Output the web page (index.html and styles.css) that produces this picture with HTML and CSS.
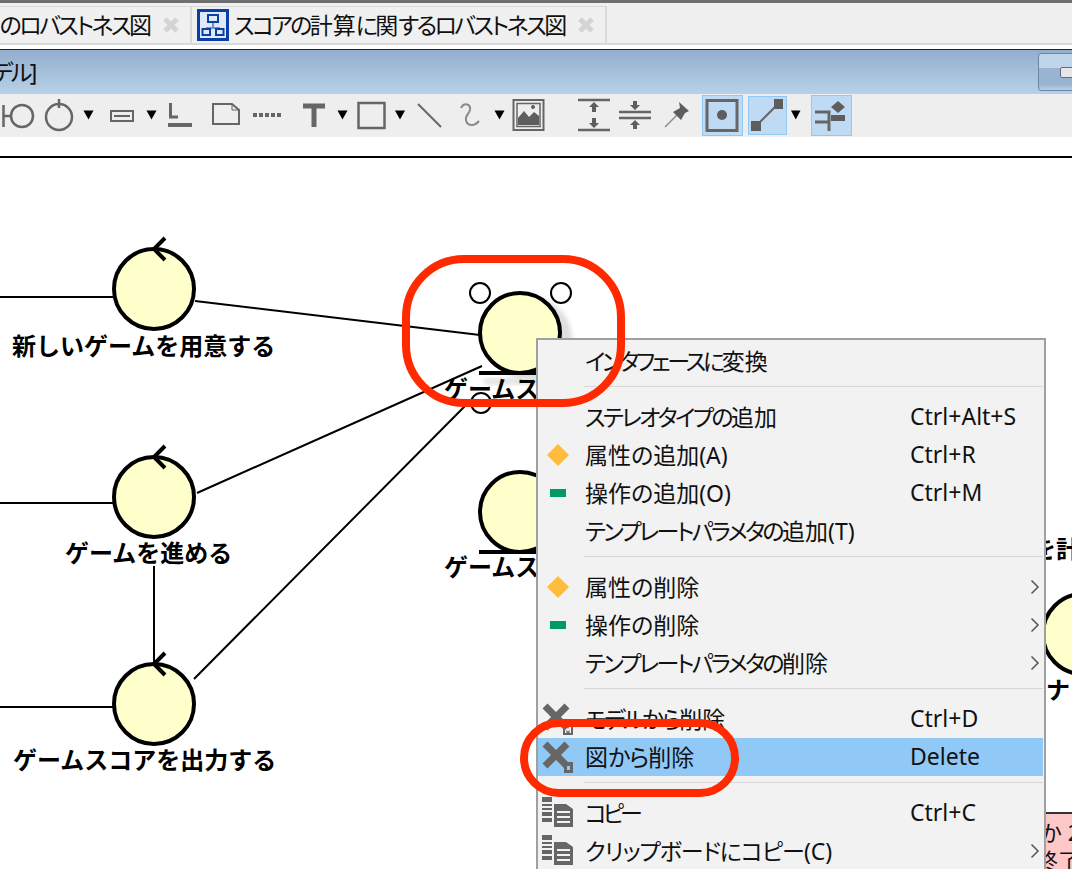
FILE: index.html
```html
<!DOCTYPE html>
<html>
<head>
  <title>ロバストネス図</title>
  <link rel="stylesheet" href="styles.css">
</head>
<body>
<div class="page">
  <div class="tabs">
    <div class="tab tab-first">
      <span class="tab-text">スコアの計算に関する<span class="kana">のロバストネス</span>図</span>
      <svg class="tab-close" width="16" height="16" viewBox="0 0 16 16"><path d="M2 2L14 14M14 2L2 14"/></svg>
    </div>
    <div class="tab tab-second">
      <svg class="tab-icon" width="32" height="32" viewBox="0 0 32 32">
        <rect x="1.500" y="1.500" width="29" height="29" fill="#dfe9f8" stroke="#0a3fa8" stroke-width="3"/>
        <path d="M16 14V19M9 19H23" stroke="#6b94d6" stroke-width="2" fill="none"/>
        <path d="M11 6H21V13H11ZM5.500 20H13V26H5.500ZM19 20H26.500V26H19Z" fill="none" stroke="#0a3fa8" stroke-width="2"/>
      </svg>
      <span class="tab-text"><span class="kana">スコアの</span>計算<span class="kana">に</span>関<span class="kana">するロバストネス</span>図</span>
      <svg class="tab-close" width="16" height="16" viewBox="0 0 16 16"><path d="M2 2L14 14M14 2L2 14"/></svg>
    </div>
  </div>

  <div class="titlebar">
    <span class="title-text">[<span class="kana">モデル</span>]</span>
    <div class="win-btn"><span class="win-min"></span></div>
  </div>

  <div class="toolbar">
    <svg class="tool" width="42" height="41" viewBox="0 95 42 41"><path d="M3.500 105V127M3.500 116H11"/><circle cx="22" cy="116" r="11"/></svg>
    <svg class="tool" width="38" height="41" viewBox="42 95 38 41"><circle cx="59" cy="117" r="13"/><path d="M59 99V108"/></svg>
    <svg class="tool" width="18" height="41" viewBox="80 95 18 41"><path class="drop" d="M83.500 110.500H93.500L88.500 119.500Z"/></svg>
    <svg class="tool" width="44" height="41" viewBox="98 95 44 41"><rect x="111" y="111" width="22" height="10" stroke-width="2"/><path d="M114 116H130" stroke-width="2"/></svg>
    <svg class="tool" width="18" height="41" viewBox="142 95 18 41"><path class="drop" d="M146.500 110.500H156.500L151.500 119.500Z"/></svg>
    <svg class="tool" width="44" height="41" viewBox="160 95 44 41"><path d="M170.500 103V117H178" stroke-width="3"/><path d="M168 125H192" stroke-width="4"/></svg>
    <svg class="tool" width="44" height="41" viewBox="204 95 44 41"><path d="M213 104H232L239 110V124H213Z" stroke-width="2"/><path d="M232 104V110H239" stroke-width="1"/></svg>
    <svg class="tool" width="47" height="41" viewBox="248 95 47 41"><path d="M253 115H281" stroke-width="4" stroke-dasharray="4 2"/></svg>
    <svg class="tool" width="37" height="41" viewBox="295 95 37 41"><path d="M303 106H325M314 106V127" stroke-width="5"/></svg>
    <svg class="tool" width="20" height="41" viewBox="332 95 20 41"><path class="drop" d="M337.500 110.500H347.500L342.500 119.500Z"/></svg>
    <svg class="tool" width="38" height="41" viewBox="352 95 38 41"><rect x="358.500" y="103" width="26" height="25" stroke-width="2.500"/></svg>
    <svg class="tool" width="20" height="41" viewBox="390 95 20 41"><path class="drop" d="M395 110.500H405L400 119.500Z"/></svg>
    <svg class="tool" width="42" height="41" viewBox="410 95 42 41"><path d="M418 104L441 127" stroke-width="2"/></svg>
    <svg class="tool" width="38" height="41" viewBox="452 95 38 41"><path d="M461 108C464 102 471 104 470 110C469 114 465 116 466 120C467 126 474 127 479 121" stroke="#8a8a8a" stroke-width="2"/></svg>
    <svg class="tool" width="18" height="41" viewBox="490 95 18 41"><path class="drop" d="M494.500 110.500H504.500L499.500 119.500Z"/></svg>
    <svg class="tool" width="62" height="41" viewBox="508 95 62 41">
      <rect x="513.500" y="100" width="30" height="30" stroke-width="2"/>
      <rect x="517" y="103.500" width="23" height="23" stroke-width="1.500"/>
      <path class="solid" d="M518 125V118L524 111L529 117L534 112L539 116V125Z"/>
      <circle class="solid" cx="533" cy="107" r="2"/>
    </svg>
    <svg class="tool" width="45" height="41" viewBox="570 95 45 41">
      <path d="M578 100H610M578 130H610" stroke-width="2.500"/>
      <path class="solid" d="M594 102L599 107H596V112H592V107H589ZM594 128L599 123H596V118H592V123H589Z"/>
    </svg>
    <svg class="tool" width="43" height="41" viewBox="615 95 43 41">
      <path d="M619 112H651M619 118H651" stroke-width="2.500"/>
      <path class="solid" d="M635 110L640 105H637V101H633V105H630ZM635 120L640 125H637V129H633V125H630Z"/>
    </svg>
    <svg class="tool" width="44" height="41" viewBox="658 95 44 41">
      <path d="M665 127L678 114" stroke="#8a8a8a" stroke-width="1.500"/>
      <path class="solid" d="M679 102L689 111L685 113L681 120L673 112L680 108Z"/>
    </svg>
    <svg class="tool" width="41" height="41" viewBox="702 95 41 41">
      <rect class="on" x="702.500" y="95.500" width="40" height="40"/>
      <rect x="707" y="100.500" width="30" height="30" stroke-width="3"/>
      <circle class="solid" cx="722" cy="115" r="5"/>
    </svg>
    <svg class="tool tool-gap" width="39" height="39" viewBox="748 96 39 39">
      <rect class="on" x="748.500" y="96.500" width="38" height="38"/>
      <path d="M756 126L778 104" stroke-width="2"/>
      <path class="solid" d="M774 99H783V109H774ZM751 121H761V131H751Z"/>
    </svg>
    <svg class="tool" width="24" height="41" viewBox="787 95 24 41"><path class="drop" d="M791 110.500H800.500L795.750 119.500Z"/></svg>
    <svg class="tool" width="41" height="41" viewBox="811 95 41 41">
      <rect class="on" x="811.500" y="95.500" width="40" height="40"/>
      <path d="M815 112H829V131M815 122H829" stroke-width="3"/>
      <path class="solid" d="M838 101L845 107L838 113L831 107ZM831 115H845V121H831Z"/>
    </svg>
  </div>

  <div class="gap-strip"></div>

  <div class="canvas">
    <svg class="diagram" width="1072" height="711" viewBox="0 158 1072 711">
      <defs>
        <filter id="soft"><feGaussianBlur stdDeviation="2"/></filter>
      </defs>

      <path class="link" d="M0 297H114M195 301L480 335M0 503H114M197 493L482 366M0 707H114M154 566V664M194 679L465 406"/>

      <circle class="actor" cx="154" cy="289" r="40"/>
      <path class="arrow" d="M165 238L154 249L165 260"/>
      <circle class="actor" cx="154" cy="497" r="40"/>
      <path class="arrow" d="M165 446L154 457L165 468"/>
      <circle class="actor" cx="154" cy="704" r="40"/>
      <path class="arrow" d="M165 653L154 664L165 675"/>

      <circle cx="530" cy="339" r="42" fill="#dedede" filter="url(#soft)"/>
      <rect x="484" y="378" width="64" height="7" fill="#e4e4e4" filter="url(#soft)"/>
      <circle class="actor" cx="520" cy="333" r="40"/>
      <path class="under" d="M479 373H560"/>
      <circle class="handle" cx="480" cy="293" r="10"/>
      <circle class="handle" cx="561" cy="293" r="10"/>
      <circle class="handle" cx="481" cy="403" r="10"/>

      <circle class="actor" cx="520" cy="512" r="40"/>
      <path class="under" d="M479 552H560"/>
      <circle class="actor" cx="1083" cy="634" r="40"/>

      <text class="label" x="12" y="355">新しいゲームを用意する</text>
      <text class="label" x="65" y="562">ゲームを進める</text>
      <text class="label" x="13" y="769">ゲームスコアを出力する</text>
      <text class="label" x="444" y="398">ゲームスコア</text>
      <text class="label" x="444" y="576">ゲームスコア</text>
      <text class="label" x="1032" y="558">を計算</text>
      <text class="label" x="1046" y="699">ナス</text>

      <rect class="note" x="1030" y="813" width="50" height="60"/>
      <text class="note-text" x="1040" y="841">か 2</text>
      <text class="note-text" x="1036" y="869">終了</text>
    </svg>
  </div>

  <div class="menu">
    <div class="row"><span class="row-label"><span class="kana kana-wide">インタフェースに</span>変換</span></div>
    <div class="sep"></div>
    <div class="row"><span class="row-label"><span class="kana">ステレオタイプの</span>追加</span><span class="row-key">Ctrl+Alt+S</span></div>
    <div class="row">
      <svg class="row-icon row-icon-small" width="24" height="24" viewBox="0 0 24 24"><path class="attr" d="M12 1L23 12L12 23L1 12Z"/></svg>
      <span class="row-label">属性の追加(A)</span><span class="row-key">Ctrl+R</span>
    </div>
    <div class="row">
      <svg class="row-icon row-icon-small" width="24" height="24" viewBox="0 0 24 24"><rect class="oper" x="4" y="8" width="16" height="8"/></svg>
      <span class="row-label">操作の追加(O)</span><span class="row-key">Ctrl+M</span>
    </div>
    <div class="row"><span class="row-label"><span class="kana">テンプレートパラメタの</span>追加(T)</span></div>
    <div class="sep"></div>
    <div class="row">
      <svg class="row-icon row-icon-small" width="24" height="24" viewBox="0 0 24 24"><path class="attr" d="M12 1L23 12L12 23L1 12Z"/></svg>
      <span class="row-label">属性の削除</span>
      <svg class="row-more" width="10" height="16" viewBox="0 0 10 16"><path d="M1.500 1.500L8 8L1.500 14.500"/></svg>
    </div>
    <div class="row">
      <svg class="row-icon row-icon-small" width="24" height="24" viewBox="0 0 24 24"><rect class="oper" x="4" y="8" width="16" height="8"/></svg>
      <span class="row-label">操作の削除</span>
      <svg class="row-more" width="10" height="16" viewBox="0 0 10 16"><path d="M1.500 1.500L8 8L1.500 14.500"/></svg>
    </div>
    <div class="row">
      <span class="row-label"><span class="kana">テンプレートパラメタの</span>削除</span>
      <svg class="row-more" width="10" height="16" viewBox="0 0 10 16"><path d="M1.500 1.500L8 8L1.500 14.500"/></svg>
    </div>
    <div class="sep"></div>
    <div class="row">
      <svg class="row-icon" width="36" height="34" viewBox="0 0 36 34">
        <path class="cross" d="M7 4L29 26M29 4L7 26"/>
        <path class="cross-mark" d="M25 23H35V33H25ZM27 25V31H28.500V27.500L30 30L31.500 27.500V31H33V25H31L30 27L29 25Z"/>
      </svg>
      <span class="row-label"><span class="kana">モデルから</span>削除</span><span class="row-key">Ctrl+D</span>
    </div>
    <div class="row row-active">
      <svg class="row-icon" width="36" height="34" viewBox="0 0 36 34">
        <path class="cross" d="M7 4L29 26M29 4L7 26"/>
        <path class="cross-mark" d="M26 22H35V33H26ZM29 26V30H32V26Z"/>
      </svg>
      <span class="row-label">図<span class="kana kana-loose">から</span>削除</span><span class="row-key">Delete</span>
    </div>
    <div class="sep"></div>
    <div class="row">
      <svg class="row-icon" width="36" height="34" viewBox="0 0 36 34">
        <path class="copy" d="M4 1H14V6H4ZM4 8H14V10H4ZM4 12H14V14H4ZM4 16H14V20H4ZM4 22H14V26H4ZM16 8H28L35 13V31H16ZM19 15V17H32V15ZM19 20V22H32V20ZM19 25V27H32V25Z"/>
      </svg>
      <span class="row-label"><span class="kana kana-tight">コピー</span></span><span class="row-key">Ctrl+C</span>
    </div>
    <div class="row">
      <svg class="row-icon" width="36" height="34" viewBox="0 0 36 34">
        <path class="copy" d="M4 1H14V6H4ZM4 8H14V10H4ZM4 12H14V14H4ZM4 16H14V20H4ZM4 22H14V26H4ZM16 8H28L35 13V31H16ZM19 15V17H32V15ZM19 20V22H32V20ZM19 25V27H32V25Z"/>
      </svg>
      <span class="row-label"><span class="kana kana-loose">クリップボードにコピー</span>(C)</span>
      <svg class="row-more" width="10" height="16" viewBox="0 0 10 16"><path d="M1.500 1.500L8 8L1.500 14.500"/></svg>
    </div>
  </div>

  <div class="mark mark-entity"></div>
  <div class="mark mark-delete"></div>
</div>
</body>
</html>
```

FILE: styles.css
```css
body {
  margin: 0;
  font-family: "Noto Sans", "Noto Sans CJK JP", sans-serif;
  color: #111;
}

.page {
  position: relative;
  width: 1072px;
  height: 869px;
  overflow: hidden;
  background: #fff;
}

/* kana is narrow in the original UI font */
.kana {
  letter-spacing: -2.6px;
}

.kana-wide {
  letter-spacing: -3.3px;
}

.kana-tight {
  letter-spacing: -4px;
}

.kana-loose {
  letter-spacing: -1px;
}

/* tabs */
.tabs {
  display: flex;
  height: 37px;
  padding-top: 3px;
  background: #f0f0f0;
  border-top: 3px solid #6f6f6f;
  border-bottom: 2px solid #dadada;
  font-size: 23px;
  font-feature-settings: "palt";
}

.tab {
  display: flex;
  align-items: center;
  flex: none;
  height: 37px;
  box-sizing: border-box;
  border-top: 1px solid #dadada;
  border-right: 2px solid #dadada;
  white-space: nowrap;
}

.tab-first {
  width: 192px;
  justify-content: flex-end;
  padding-right: 11px;
}

.tab-second {
  width: 415px;
  padding-left: 5px;
}

.tab-text {
  padding-bottom: 3px;
}

.tab-icon {
  flex: none;
  margin-right: 5px;
}

.tab-close {
  flex: none;
  margin-left: 11px;
}

.tab-close path {
  stroke: #d4d4d4;
  stroke-width: 5;
  fill: none;
}

/* title */
.titlebar {
  display: flex;
  align-items: center;
  justify-content: space-between;
  height: 44px;
  margin-top: 4px;
  border-top: 1px solid #1d2733;
  background: linear-gradient(#92aecd, #b8d1ea);
  font-size: 23px;
  font-feature-settings: "palt";
  overflow: hidden;
}

.title-text {
  margin-left: -35px;
  padding-bottom: 2px;
  white-space: nowrap;
}

.win-btn {
  display: flex;
  align-items: center;
  width: 60px;
  height: 38px;
  margin-right: -26px;
  padding-left: 21px;
  box-sizing: border-box;
  border: 1px solid #6d84a3;
  border-radius: 3px;
  background: linear-gradient(#c0d4ea 0, #c0d4ea 38%, #9ab3d0 40%, #9ab3d0 85%, #b8d1ea 100%);
}

.win-min {
  width: 30px;
  height: 9px;
  border: 1px solid #5c6f88;
  border-radius: 2px;
  background: #e6e6e6;
}

/* toolbar */
.toolbar {
  display: flex;
  height: 42px;
  padding-top: 1px;
  background: #eee;
}

.tool {
  flex: none;
  display: block;
  fill: none;
  stroke: #666;
  stroke-width: 2.5;
}

.tool-gap {
  margin-left: 5px;
  margin-top: 1px;
}

.tool .solid {
  fill: #5e5e5e;
  stroke: none;
}

.tool .drop {
  fill: #000;
  stroke: none;
}

.tool .on {
  fill: #bfdbf3;
  stroke: #90c8f6;
  stroke-width: 1;
}

.gap-strip {
  height: 19px;
  border-bottom: 2px solid #000;
}

/* diagram */
.canvas {
  height: 711px;
}

.diagram {
  display: block;
}

.link {
  fill: none;
  stroke: #000;
  stroke-width: 2;
}

.actor {
  fill: #ffc;
  stroke: #000;
  stroke-width: 4;
}

.arrow {
  fill: none;
  stroke: #000;
  stroke-width: 4;
}

.under {
  fill: none;
  stroke: #000;
  stroke-width: 4;
}

.handle {
  fill: #fff;
  stroke: #000;
  stroke-width: 2;
}

.label {
  font-size: 24px;
  font-weight: 700;
  fill: #000;
}

.note {
  fill: #ffc8c8;
  stroke: #333;
  stroke-width: 2;
}

.note-text {
  font-size: 22px;
  fill: #111;
}

/* context menu */
.menu {
  position: absolute;
  left: 536px;
  top: 338px;
  width: 510px;
  height: 533px;
  padding: 2px 1px 0 0;
  box-sizing: border-box;
  background: #f2f2f2;
  border: 2px solid #a0a0a0;
  font-size: 23px;
  font-feature-settings: "palt";
  overflow: hidden;
}

.row {
  display: flex;
  align-items: center;
  position: relative;
  height: 38px;
  padding-left: 47px;
}

.row-active {
  background: #90c8f6;
}

.row-icon {
  position: absolute;
  left: 0;
  top: 2px;
}

.row-icon-small {
  left: 8px;
  top: 7px;
}

.row-label {
  flex: 1;
  padding-bottom: 2px;
  white-space: nowrap;
}

.row-key {
  width: 133px;
  padding-bottom: 2px;
  font-feature-settings: normal;
}

.row-more {
  margin-right: 3px;
}

.row-more path {
  fill: none;
  stroke: #555;
  stroke-width: 1.5;
}

.sep {
  height: 1px;
  margin: 6px 0 11px 46px;
  background: #d7d7d7;
}

.attr {
  fill: #ffbc3d;
}

.oper {
  fill: #009b63;
}

.cross {
  fill: none;
  stroke: #666;
  stroke-width: 7;
}

.cross-mark,
.copy {
  fill: #666;
  fill-rule: evenodd;
}

/* red hand-drawn marks */
.mark {
  position: absolute;
  border: 8px solid #ff2a00;
  box-sizing: border-box;
}

.mark-entity {
  left: 402px;
  top: 255px;
  width: 223px;
  height: 152px;
  border-radius: 62px;
}

.mark-delete {
  left: 520px;
  top: 719px;
  width: 219px;
  height: 78px;
  border-radius: 39px;
}
```
